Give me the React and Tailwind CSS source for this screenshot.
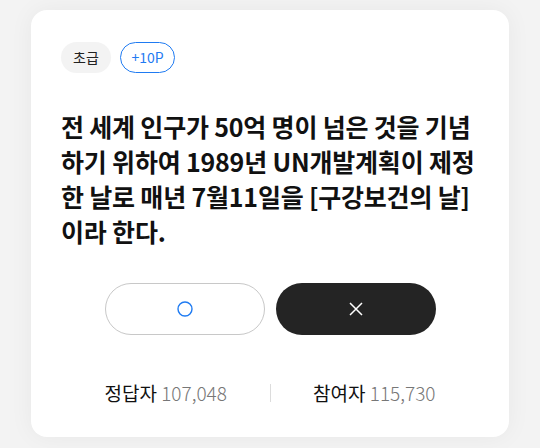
import React from "react";

const font = { fontFamily: '"Noto Sans CJK KR", "Noto Sans", sans-serif' };

function Badge({ children, outlined }) {
  return outlined ? (
    <span className="w-[55px] h-[31px] rounded-full border border-[#1f7bf2] text-[#1f7bf2] text-[14px] flex items-center justify-center">
      {children}
    </span>
  ) : (
    <span className="w-[50px] h-[31px] rounded-full bg-[#f3f3f3] text-[#222] text-[14px] flex items-center justify-center">
      {children}
    </span>
  );
}

export default function App() {
  return (
    <div
      className="w-[540px] h-[448px] bg-[#f3f3f3] pt-[10px] pl-[31px] pr-[31px] overflow-hidden"
      style={font}
    >
      <div className="w-[478px] h-[427px] bg-white rounded-[16px] shadow-[0_0_24px_rgba(0,0,0,0.05)] pt-[32px] px-[30px]">
        <div className="flex gap-[9px]">
          <Badge>초급</Badge>
          <Badge outlined>+10P</Badge>
        </div>

        <p className="mt-[36px] text-[25px] leading-[35px] font-bold text-[#111] tracking-[-0.2px] break-all">
          전 세계 인구가 50억 명이 넘은 것을 기념하기 위하여 1989년 UN개발계획이 제정한 날로 매년 7월11일을 [구강보건의 날]이라 한다.
        </p>

        <div className="mt-[34px] flex justify-center gap-[11px]">
          <button className="w-[160px] h-[52px] rounded-full border border-[#c8c8c8] bg-white flex items-center justify-center">
            <svg width="18" height="18" viewBox="0 0 18 18">
              <circle cx="9" cy="9" r="7" fill="none" stroke="#1f7bf2" strokeWidth="1.4" />
            </svg>
          </button>
          <button className="w-[160px] h-[52px] rounded-full bg-[#242424] flex items-center justify-center">
            <svg width="16" height="16" viewBox="0 0 16 16">
              <path d="M2 2L14 14M14 2L2 14" stroke="#fff" strokeWidth="1.5" />
            </svg>
          </button>
        </div>

        <div className="mt-[44px] mx-auto w-[331px] flex items-center justify-between text-[19px]">
          <span className="text-[#111]">
            정답자 <span className="text-[#777] font-light">107,048</span>
          </span>
          <span className="w-px h-[18px] bg-[#dcdcdc]" />
          <span className="text-[#111]">
            참여자 <span className="text-[#777] font-light">115,730</span>
          </span>
        </div>
      </div>
    </div>
  );
}
